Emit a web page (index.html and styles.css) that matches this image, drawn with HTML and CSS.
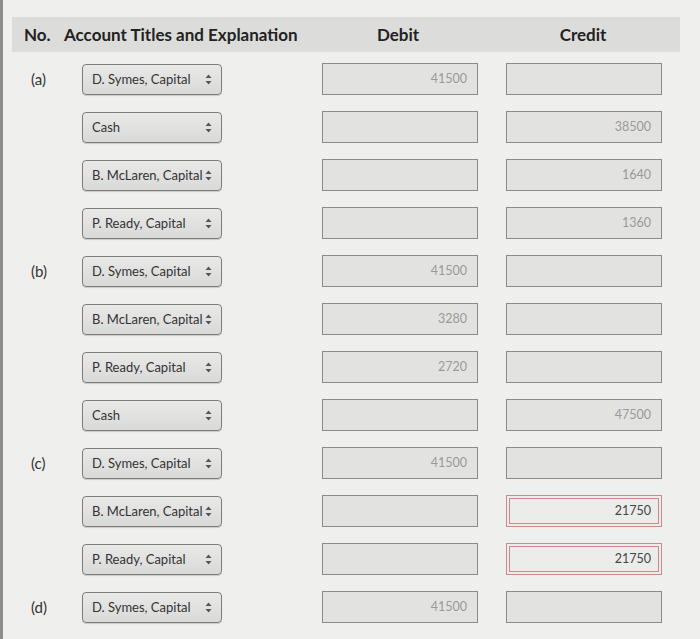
FILE: index.html
```html
<!DOCTYPE html>
<html lang="en">
<head>
    <meta charset="UTF-8">
    <meta name="viewport" content="width=device-width, initial-scale=1.0">
    <title>Journal Entries</title>
    <link rel="stylesheet" href="styles.css">
</head>
<body>
    <div class="page">
        <div class="head-row">
            <div class="h-no">No.</div>
            <div class="h-title">Account Titles and Explanation</div>
            <div class="h-amt">Debit</div>
            <div class="h-amt">Credit</div>
        </div>

        <div class="rows" id="rows"></div>
    </div>

    <script>
        const entries = [
            ["(a)", "D. Symes, Capital", "41500", ""],
            ["", "Cash", "", "38500"],
            ["", "B. McLaren, Capital", "", "1640"],
            ["", "P. Ready, Capital", "", "1360"],
            ["(b)", "D. Symes, Capital", "41500", ""],
            ["", "B. McLaren, Capital", "3280", ""],
            ["", "P. Ready, Capital", "2720", ""],
            ["", "Cash", "", "47500"],
            ["(c)", "D. Symes, Capital", "41500", ""],
            ["", "B. McLaren, Capital", "", "21750", "bad"],
            ["", "P. Ready, Capital", "", "21750", "bad"],
            ["(d)", "D. Symes, Capital", "41500", ""],
            ["", null, "", ""]
        ];

        const arrows = '<svg class="arrows" width="7" height="11" viewBox="0 0 7 11"><path d="M3.5 0.5 L6.5 4 L0.5 4 Z M3.5 10.5 L6.5 7 L0.5 7 Z" fill="#555"/></svg>';

        let html = "";
        entries.forEach(e => {
            const select = e[1] === null ? '' : `<div class="select"><span>${e[1]}</span>${arrows}</div>`;
            html += `<div class="row">
                <div class="no">${e[0]}</div>
                <div class="cell">${select}</div>
                <div class="cell"><div class="amount">${e[2]}</div></div>
                <div class="cell"><div class="amount ${e[4] || ''}">${e[3]}</div></div>
            </div>`;
        });
        document.getElementById('rows').innerHTML = html;
    </script>
</body>
</html>
```

FILE: styles.css
```css
body {
    margin: 0;
    font-family: Lato, "Liberation Sans", sans-serif;
    background: #efefed;
    height: 639px;
    overflow: hidden;
}
.page {
    border-left: 3px solid #8c8c8c;
    height: 100%;
    padding-top: 17px;
    box-sizing: border-box;
}
.head-row {
    display: grid;
    grid-template-columns: 52px 246px 176px 194px;
    margin-left: 9px;
    width: 668px;
    height: 35px;
    align-items: center;
    background: #dcdcdb;
    font-weight: bold;
    font-size: 17px;
    color: #222;
}
.h-no {
    padding-left: 12px;
}
.h-amt {
    text-align: center;
}
.rows {
    margin-left: 9px;
    padding-top: 3px;
}
.row {
    display: grid;
    grid-template-columns: 58px 240px 184px 186px;
    height: 48px;
    align-items: center;
}
.no {
    padding-left: 19px;
    font-size: 15px;
    color: #333;
}
.cell {
    padding-left: 12px;
}
.select {
    width: 140px;
    height: 31px;
    box-sizing: border-box;
    border: 1px solid #7d7d7d;
    border-radius: 4px;
    background: linear-gradient(#e9e9e8, #d9d9d8);
    display: flex;
    align-items: center;
    justify-content: space-between;
    padding: 0 9px 0 9px;
    font-size: 13px;
    color: #333;
    box-shadow: 0 1px 1px rgba(0, 0, 0, 0.15);
}
.amount {
    width: 156px;
    height: 32px;
    box-sizing: border-box;
    border: 1px solid #8a8a8a;
    background: #e2e2e1;
    text-align: right;
    padding: 7px 10px 0 0;
    font-size: 12.5px;
    color: #9a9a9a;
}
.amount.bad {
    background: #ececeb;
    border: 1px solid #c98a8a;
    outline: 1px solid #c98a8a;
    outline-offset: -4px;
    color: #444;
}
```
